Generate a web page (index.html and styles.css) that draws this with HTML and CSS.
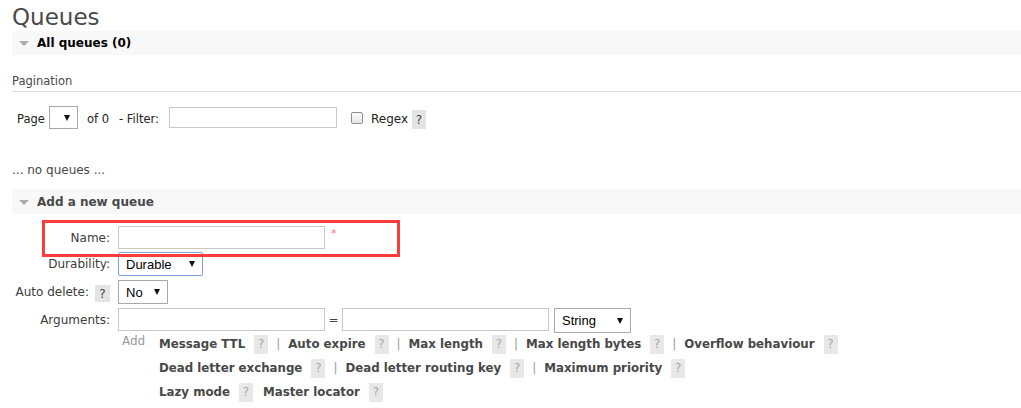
FILE: index.html
```html
<!DOCTYPE html>
<html>
<head>
<meta charset="utf-8">
<title>Queues</title>
<link rel="stylesheet" href="styles.css">
</head>
<body>
<div class="page">
  <h1 class="title">Queues</h1>

  <div class="bar bar-all">
    <span class="tri"></span>
    <span class="bar-title">All queues (0)</span>
  </div>

  <h3 class="pag-head">Pagination</h3>
  <div class="pag-row">
    <span class="ptxt page-lbl">Page</span>
    <div class="select sel-page"><span class="sel-text"></span><span class="caret"></span></div>
    <span class="ptxt of">of 0</span>
    <span class="ptxt filter-lbl">- Filter:</span>
    <input class="txt inp-filter" type="text">
    <input class="chk" type="checkbox">
    <span class="ptxt regex">Regex</span>
    <span class="help help-dark help-regex">?</span>
  </div>

  <p class="empty">... no queues ...</p>

  <div class="bar bar-add">
    <span class="tri"></span>
    <span class="bar-title">Add a new queue</span>
  </div>

  <div class="form">
    <div class="frow row-name">
      <div class="flabel">Name:</div>
      <input class="txt inp-wide" type="text">
      <span class="req">*</span>
    </div>
    <div class="frow row-dur">
      <div class="flabel">Durability:</div>
      <div class="select sel-dur focus"><span class="sel-text">Durable</span><span class="caret"></span></div>
    </div>
    <div class="frow row-auto">
      <div class="flabel">Auto delete:<span class="help help-dark help-auto">?</span></div>
      <div class="select sel-no"><span class="sel-text">No</span><span class="caret"></span></div>
    </div>
    <div class="frow row-args">
      <div class="flabel flabel-args">Arguments:</div>
      <div class="args">
        <div class="args-inputs">
          <input class="txt inp-wide" type="text">
          <span class="eq">=</span>
          <input class="txt inp-wide" type="text">
          <div class="select sel-type"><span class="sel-text">String</span><span class="caret"></span></div>
        </div>
        <div class="args-links">
          <span class="add">Add</span>
          <div class="link-rows">
            <div class="lrow">
              <span class="arg">Message TTL</span><span class="help help-light">?</span><span class="sep">|</span>
              <span class="arg">Auto expire</span><span class="help help-light">?</span><span class="sep">|</span>
              <span class="arg">Max length</span><span class="help help-light">?</span><span class="sep">|</span>
              <span class="arg">Max length bytes</span><span class="help help-light">?</span><span class="sep">|</span>
              <span class="arg">Overflow behaviour</span><span class="help help-light">?</span>
            </div>
            <div class="lrow">
              <span class="arg">Dead letter exchange</span><span class="help help-light">?</span><span class="sep">|</span>
              <span class="arg">Dead letter routing key</span><span class="help help-light">?</span><span class="sep">|</span>
              <span class="arg">Maximum priority</span><span class="help help-light">?</span>
            </div>
            <div class="lrow">
              <span class="arg">Lazy mode</span><span class="help help-light gap">?</span>
              <span class="arg">Master locator</span><span class="help help-light">?</span>
            </div>
          </div>
        </div>
      </div>
    </div>
  </div>

  <div class="annot"></div>
</div>
</body>
</html>
```

FILE: styles.css
```css
* {
  box-sizing: border-box;
}

body {
  margin: 0;
  background: #fff;
  color: #444;
  font-family: "DejaVu Sans", Verdana, sans-serif;
  font-size: 12px;
}

.page {
  position: relative;
  padding: 4px 0 0 12px;
}

.title {
  margin: 0;
  font-size: 23px;
  line-height: 27px;
  font-weight: normal;
  color: #4a4a4a;
}

/* section bars */
.bar {
  display: flex;
  align-items: center;
  background: #f8f8f8;
  height: 24px;
}

.bar-add {
  margin-top: 12px;
  height: 25px;
}

.tri {
  width: 0;
  height: 0;
  border-left: 5px solid transparent;
  border-right: 5px solid transparent;
  border-top: 5px solid #aaa;
  margin: 1px 8px 0 7px;
}

.bar-title {
  font-weight: bold;
  font-size: 12px;
  color: #484848;
}

.bar-all .bar-title {
  color: #000;
}

/* pagination */
.pag-head {
  margin: 19px 0 0;
  font-size: 11.5px;
  line-height: 14px;
  font-weight: normal;
  color: #484848;
  padding-bottom: 3px;
  border-bottom: 1px solid #ddd;
}

.pag-row {
  display: flex;
  align-items: center;
  height: 23px;
  margin-top: 14px;
  padding-left: 5px;
  font-size: 11.5px;
  color: #222;
}

.ptxt {
  padding-top: 2px;
  white-space: nowrap;
}

.page-lbl {
  width: 32px;
}

.sel-page {
  width: 29px;
  height: 23px;
}

.of {
  width: 32px;
  margin-left: 9px;
}

.filter-lbl {
  width: 50px;
}

.inp-filter {
  width: 168px;
  height: 21px;
}

.chk {
  appearance: none;
  -webkit-appearance: none;
  width: 12px;
  height: 12px;
  margin: 1px 0 0 14px;
  border: 1px solid #8f8f8f;
  border-radius: 2px;
  background: linear-gradient(#fdfdfd, #e6e6e6);
}

.regex {
  width: 41px;
  margin-left: 8px;
  font-size: 12px;
}

.help-regex {
  align-self: flex-end;
  height: 18px;
}

.empty {
  margin: 34px 0 0;
  font-size: 12px;
  line-height: 14px;
  color: #484848;
}

/* controls */
.txt {
  display: block;
  border: 1px solid #c8c8c8;
  background: #fff;
  margin: 0;
  padding: 0;
  font: inherit;
}

.select {
  display: flex;
  align-items: center;
  justify-content: space-between;
  border: 1px solid #a9a9a9;
  background: #fff;
  padding: 0 7px 0 7px;
  font-family: "Liberation Sans", Arial, sans-serif;
  font-size: 13px;
  color: #000;
}

.select.focus {
  border-color: #7ba2e6;
  border-radius: 2px;
}

.caret {
  width: 0;
  height: 0;
  border-left: 3px solid transparent;
  border-right: 3px solid transparent;
  border-top: 6px solid #111;
}

.help {
  display: flex;
  align-items: center;
  justify-content: center;
  width: 14px;
  height: 19px;
  background: #e4e4e4;
  font-size: 12px;
}

.help-dark {
  color: #444;
}

.help-light {
  color: #a8a8a8;
  background: #e8e8e8;
}

/* form */
.form {
  margin-top: 12px;
}

.frow {
  display: flex;
  align-items: center;
}

.flabel {
  display: flex;
  align-items: center;
  justify-content: flex-end;
  width: 98px;
  margin-right: 8px;
  font-size: 12px;
  color: #3c3c3c;
}

.row-name {
  height: 23px;
  margin-bottom: 3px;
}

.inp-wide {
  width: 207px;
  height: 23px;
}

.req {
  align-self: flex-start;
  margin: 1px 0 0 6px;
  color: #f77;
  font-size: 11px;
  line-height: 14px;
}

.row-dur {
  height: 24px;
  margin-bottom: 4px;
}

.sel-dur {
  width: 85px;
  height: 24px;
}

.row-auto {
  height: 24px;
  margin-bottom: 4px;
}

.help-auto {
  width: 15px;
  height: 17px;
  margin: 3px 0 0 6px;
}

.sel-no {
  width: 50px;
  height: 24px;
}

.row-args {
  align-items: flex-start;
}

.flabel-args {
  height: 24px;
}

.args-inputs {
  display: flex;
  align-items: flex-start;
  height: 24px;
}

.eq {
  width: 17px;
  height: 23px;
  display: flex;
  align-items: center;
  justify-content: center;
  font-size: 12px;
  color: #444;
}

.sel-type {
  width: 77px;
  height: 25px;
  margin-left: 5px;
}

.args-links {
  display: flex;
  align-items: flex-start;
}

.add {
  width: 41px;
  padding-left: 4px;
  margin-top: 2px;
  line-height: 14px;
  font-size: 12px;
  color: #9a9a9a;
}

.lrow {
  display: flex;
  align-items: center;
  height: 24px;
}

.arg {
  font-weight: bold;
  font-size: 11.8px;
  color: #484848;
  margin-right: 9px;
}

.sep {
  margin: 0 8px;
  color: #9a9a9a;
  font-size: 12px;
}

.help.gap {
  margin-right: 10px;
}

/* red annotation frame drawn over the form */
.annot {
  position: absolute;
  left: 42px;
  top: 220px;
  width: 358px;
  height: 37px;
  border: 3px solid #fa3c3c;
}
```
